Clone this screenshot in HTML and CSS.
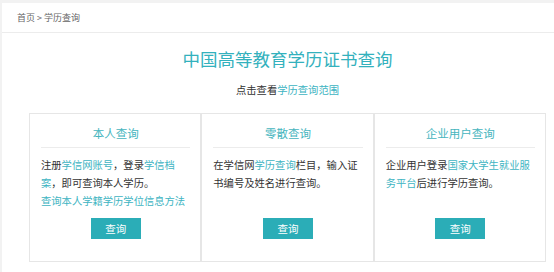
FILE: index.html
```html
<!DOCTYPE html>
<html lang="zh-CN">
<head>
<meta charset="utf-8">
<title>学历查询</title>
<link rel="stylesheet" href="styles.css">
</head>
<body>
<div class="panel">
  <div class="crumb">首页 &gt; 学历查询</div>
  <div class="content">
    <h1 class="title">中国高等教育学历证书查询</h1>
    <p class="sub">点击查看<a class="link" href="#">学历查询范围</a></p>
    <div class="cards">
      <div class="card">
        <div class="card-title">本人查询</div>
        <div class="card-body">
          <p class="txt">注册<a class="link" href="#">学信网账号</a>，登录<a class="link" href="#">学信档案</a>，即可查询本人学历。</p>
          <p class="txt"><a class="link" href="#">查询本人学籍学历学位信息方法</a></p>
        </div>
        <a class="btn" href="#">查询</a>
      </div>
      <div class="card">
        <div class="card-title">零散查询</div>
        <div class="card-body">
          <p class="txt">在学信网<a class="link" href="#">学历查询</a>栏目，输入证书编号及姓名进行查询。</p>
        </div>
        <a class="btn" href="#">查询</a>
      </div>
      <div class="card">
        <div class="card-title">企业用户查询</div>
        <div class="card-body">
          <p class="txt">企业用户登录<a class="link" href="#">国家大学生就业服务平台</a>后进行学历查询。</p>
        </div>
        <a class="btn" href="#">查询</a>
      </div>
    </div>
  </div>
</div>
</body>
</html>
```

FILE: styles.css
```css
html, body {
  margin: 0;
  padding: 0;
}
body {
  background: #f2f2f2;
  font-family: "Noto Sans CJK SC", "Liberation Sans", sans-serif;
  color: #333;
  height: 272px;
  overflow: hidden;
}
.panel {
  margin: 3px 0 0 2px;
  background: #fff;
  height: 269px;
}
.crumb {
  height: 29px;
  line-height: 29px;
  padding-left: 15px;
  font-size: 9px;
  color: #666;
  border-bottom: 1px solid #ececec;
}
.content {
  width: 517px;
  margin-left: 27px;
}
.title {
  margin: 16px 0 0;
  font-size: 17.5px;
  line-height: 20px;
  font-weight: normal;
  color: #33b1bd;
  text-align: center;
}
.sub {
  margin: 13px 0 0;
  font-size: 10.3px;
  line-height: 16px;
  text-align: center;
  color: #333;
}
.link {
  color: #3db4c2;
  text-decoration: none;
}
.cards {
  display: flex;
  margin-top: 15px;
}
.card {
  flex: 1;
  border: 1px solid #e6e6e6;
  padding: 0 10px 22px 11px;
  display: flex;
  flex-direction: column;
  height: 125px;
}
.card-title {
  padding-top: 5px;
  line-height: 28px;
  font-size: 11.5px;
  color: #46b5be;
  text-align: center;
  border-bottom: 1px solid #ececec;
}
.card-body {
  flex: 1;
  margin-top: 8px;
}
.txt {
  margin: 0;
  font-size: 10.3px;
  line-height: 18px;
}
.btn {
  align-self: center;
  width: 50px;
  height: 21px;
  line-height: 21px;
  background: #2badb7;
  color: #fff;
  font-size: 10.5px;
  text-align: center;
  text-decoration: none;
}
```
